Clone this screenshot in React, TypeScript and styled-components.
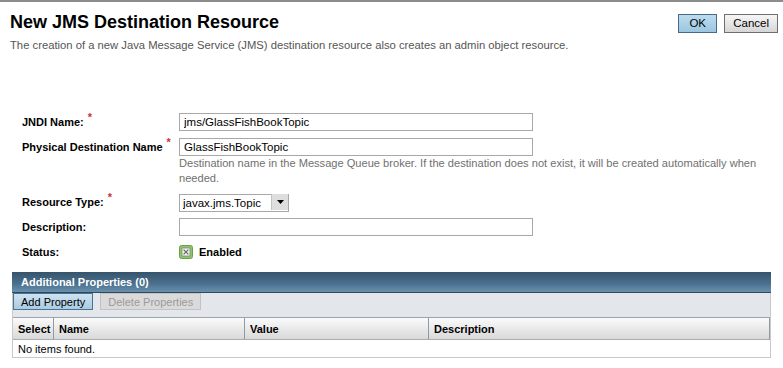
import styled, { createGlobalStyle } from 'styled-components';

const Global = createGlobalStyle`
  html, body {
    margin: 0;
    background: #fff;
    font-family: "Liberation Sans", Arial, sans-serif;
    color: #000;
  }
`;

const Page = styled.div`
  width: 783px;
  border-top: 2px solid #8c8c8c;
  box-sizing: border-box;
`;

const Header = styled.div`
  display: flex;
  justify-content: space-between;
  align-items: flex-start;
  padding: 9px 5px 0 10px;
`;

const Title = styled.h1`
  margin: 0;
  font-size: 18px;
  line-height: 22px;
  font-weight: bold;
`;

const Subtitle = styled.p`
  margin: 5px 0 0;
  font-size: 11.25px;
  line-height: 14px;
  color: #555;
`;

const Actions = styled.div`
  display: flex;
  gap: 7px;
  padding-top: 3px;
`;

// Page-level buttons: OK is the primary (blue), Cancel the plain grey one.
const PageButton = styled.button<{ $primary?: boolean }>`
  height: 19px;
  padding: 0 8px;
  min-width: 39px;
  margin: 0;
  font: 11.5px/1 "Liberation Sans", Arial, sans-serif;
  color: #000;
  border: 1px solid ${(p) => (p.$primary ? '#47698a' : '#6f6f6f')};
  background: ${(p) =>
    p.$primary
      ? 'linear-gradient(#bcdcef, #9cc6e0)'
      : 'linear-gradient(#f6f6f6, #d6d6d6)'};
`;

const Form = styled.div`
  display: flex;
  flex-direction: column;
  gap: 7px;
  margin: 61px 0 0 22px;
`;

const Row = styled.div`
  display: grid;
  grid-template-columns: 157px 1fr;
  align-items: start;
`;

const Label = styled.label`
  height: 18px;
  display: flex;
  align-items: center;
  font-size: 11px;
  font-weight: bold;
`;

const Required = styled.span`
  color: #c8323a;
  font-size: 11px;
  margin-left: 4px;
  align-self: flex-start;
  line-height: 10px;
  margin-top: -1px;
`;

const Field = styled.div`
  display: flex;
  flex-direction: column;
`;

const TextInput = styled.input`
  box-sizing: border-box;
  width: 354px;
  height: 18px;
  border: 1px solid #a8a8a8;
  padding: 0 4px;
  font: 11.5px "Liberation Sans", Arial, sans-serif;
  color: #000;
  outline: none;
  background: #fff;
`;

const Help = styled.div`
  font-size: 11.1px;
  line-height: 15px;
  color: #707070;
  width: 592px;
`;

const SelectBox = styled.div`
  position: relative;
  width: 110px;
  height: 18px;
`;

const Select = styled.select`
  appearance: none;
  box-sizing: border-box;
  width: 100%;
  height: 18px;
  border: 1px solid #a8a8a8;
  padding: 0 0 0 3px;
  font: 11.5px "Liberation Sans", Arial, sans-serif;
  color: #000;
  background: #fff;
  border-radius: 0;
`;

const SelectArrow = styled.span`
  position: absolute;
  top: 1px;
  right: 1px;
  bottom: 1px;
  width: 16px;
  background: #dedede;
  border-left: 1px solid #c4c4c4;
  display: flex;
  align-items: center;
  justify-content: center;
  pointer-events: none;
`;

const Status = styled.div`
  display: flex;
  align-items: center;
  gap: 6px;
  height: 18px;
  font-size: 11px;
  font-weight: bold;
`;

const Table = styled.div`
  margin: 11px 12px 0 12px;
  border: 1px solid #c9c9c9;
  border-top: none;
`;

const TableTitle = styled.div`
  height: 20px;
  display: flex;
  align-items: center;
  padding-left: 9px;
  color: #fff;
  font-size: 11px;
  font-weight: bold;
  background: linear-gradient(#36546b, #4b7190 60%, #6990ad);
  border-bottom: 1px solid #2f4a5e;
  margin: 0 -1px;
`;

const ButtonBar = styled.div`
  display: flex;
  gap: 7px;
  height: 24px;
  background: #e3e7ec;
  border-bottom: 1px solid #9ba5ae;
`;

const BarButton = styled.button<{ $disabled?: boolean }>`
  height: 17px;
  margin: 0;
  padding: 0 7px;
  font: 11px "Liberation Sans", Arial, sans-serif;
  color: ${(p) => (p.$disabled ? '#9a9a9a' : '#000')};
  border: 1px solid ${(p) => (p.$disabled ? '#c2c2c2' : '#4c7192')};
  background: ${(p) =>
    p.$disabled ? '#dadada' : 'linear-gradient(#cfe3f1, #a9cbe2)'};
`;

const Grid = styled.div`
  display: grid;
  grid-template-columns: 41px 191px 184px 1fr;
`;

const HeadCell = styled.div`
  height: 21px;
  display: flex;
  align-items: center;
  padding-left: 5px;
  font-size: 11px;
  font-weight: bold;
  background: linear-gradient(#fbfbfb, #e6e6e6 60%, #d9d9d9);
  border-right: 1px solid #8f9aa3;
  border-bottom: 1px solid #a6adb3;
  &:last-child {
    border-right: none;
  }
`;

const EmptyRow = styled.div`
  grid-column: 1 / -1;
  height: 17px;
  display: flex;
  align-items: center;
  padding-left: 5px;
  font-size: 11px;
`;

function CheckIcon() {
  return (
    <svg width="14" height="14" viewBox="0 0 14 14">
      <rect x="0.5" y="0.5" width="13" height="13" rx="2" fill="#8fc46c" stroke="#6aa24a" />
      <rect x="3" y="3" width="8" height="8" fill="#f2f7ee" stroke="#7c8a74" strokeWidth="0.8" />
      <path d="M4.6 4.6 L9.4 9.4 M9.4 4.6 L4.6 9.4" stroke="#6b6b6b" strokeWidth="1.3" />
    </svg>
  );
}

export default function App() {
  return (
    <Page>
      <Global />
      <Header>
        <div>
          <Title>New JMS Destination Resource</Title>
          <Subtitle>
            The creation of a new Java Message Service (JMS) destination resource also creates an
            admin object resource.
          </Subtitle>
        </div>
        <Actions>
          <PageButton $primary>OK</PageButton>
          <PageButton>Cancel</PageButton>
        </Actions>
      </Header>

      <Form>
        <Row>
          <Label>
            JNDI Name:<Required>*</Required>
          </Label>
          <TextInput readOnly value="jms/GlassFishBookTopic" />
        </Row>
        <Row>
          <Label>
            Physical Destination Name<Required>*</Required>
          </Label>
          <Field>
            <TextInput readOnly value="GlassFishBookTopic" />
            <Help>
              Destination name in the Message Queue broker. If the destination does not exist, it
              will be created automatically when needed.
            </Help>
          </Field>
        </Row>
        <Row>
          <Label>
            Resource Type:<Required>*</Required>
          </Label>
          <SelectBox>
            <Select defaultValue="javax.jms.Topic">
              <option>javax.jms.Topic</option>
              <option>javax.jms.Queue</option>
            </Select>
            <SelectArrow>
              <svg width="7" height="4" viewBox="0 0 7 4">
                <path d="M0 0 H7 L3.5 4 Z" fill="#000" />
              </svg>
            </SelectArrow>
          </SelectBox>
        </Row>
        <Row>
          <Label>Description:</Label>
          <TextInput readOnly value="" />
        </Row>
        <Row>
          <Label>Status:</Label>
          <Status>
            <CheckIcon />
            Enabled
          </Status>
        </Row>
      </Form>

      <Table>
        <TableTitle>Additional Properties (0)</TableTitle>
        <ButtonBar>
          <BarButton>Add Property</BarButton>
          <BarButton $disabled>Delete Properties</BarButton>
        </ButtonBar>
        <Grid>
          <HeadCell>Select</HeadCell>
          <HeadCell>Name</HeadCell>
          <HeadCell>Value</HeadCell>
          <HeadCell>Description</HeadCell>
          <EmptyRow>No items found.</EmptyRow>
        </Grid>
      </Table>
    </Page>
  );
}
